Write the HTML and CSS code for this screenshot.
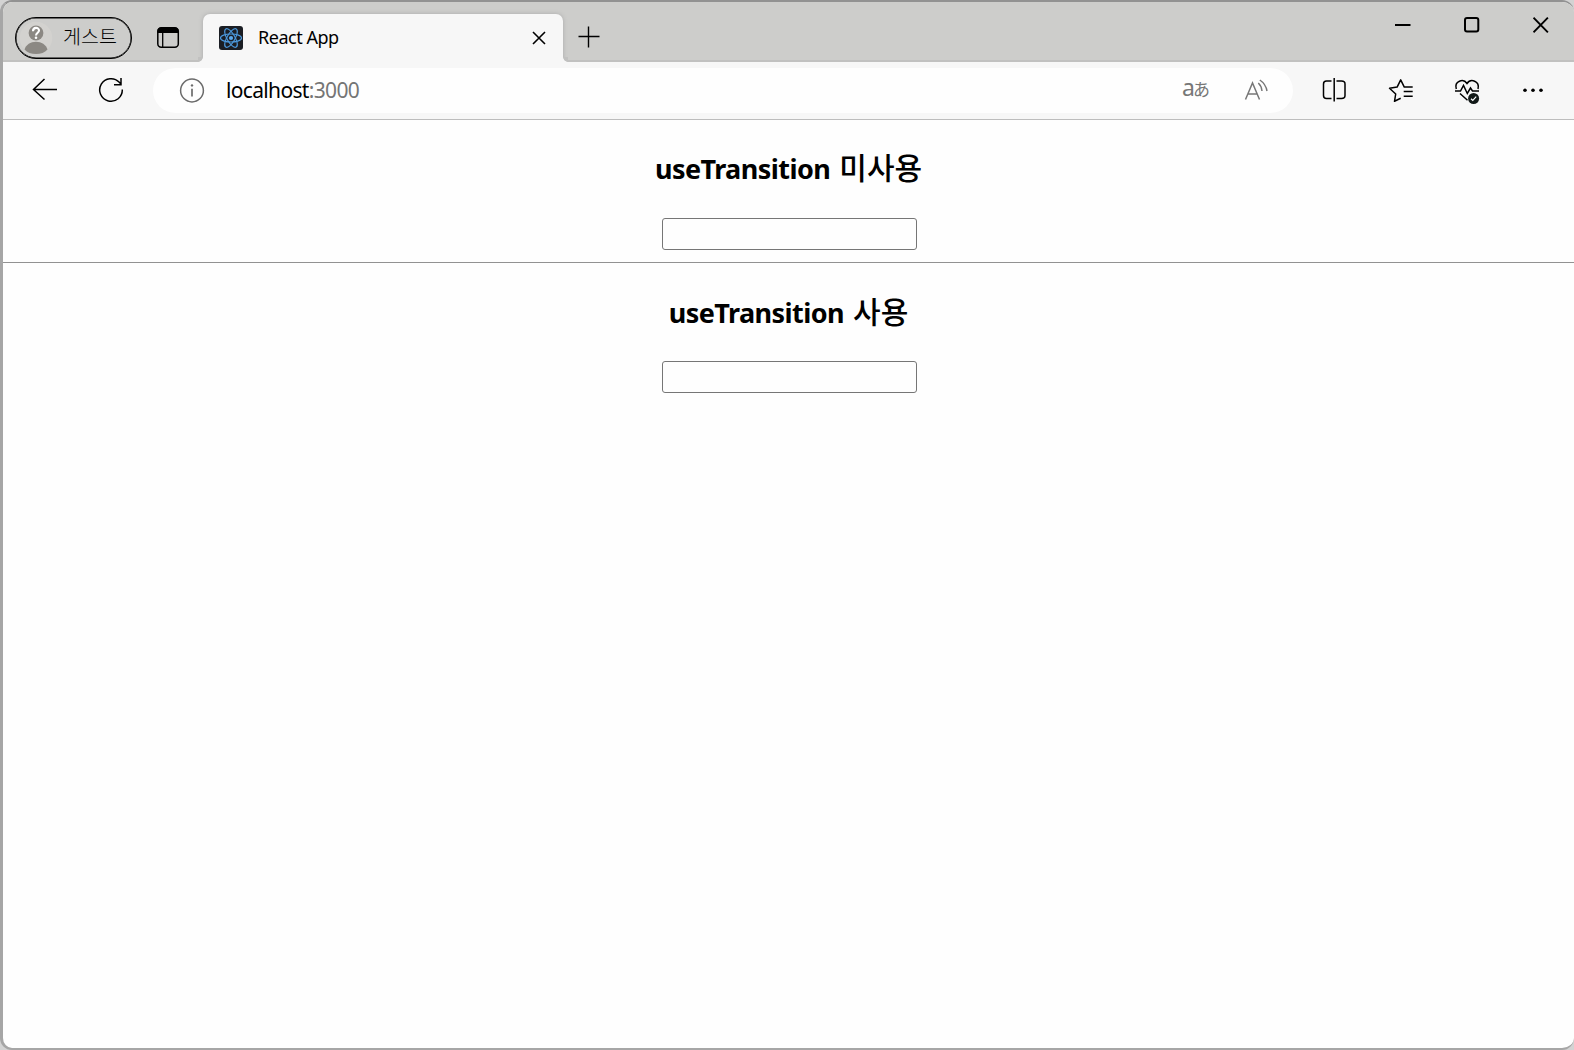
FILE: index.html
```html
<!DOCTYPE html>
<html lang="ko">
<head>
<meta charset="utf-8">
<title>React App</title>
<link rel="stylesheet" href="styles.css">
</head>
<body>
<div class="window">
  <header class="titlebar">
    <div class="profile">
      <svg class="avatar" width="34" height="34" viewBox="19 21 34 34">
        <circle cx="36" cy="38" r="16.3" fill="#d3d2cf"/>
        <circle cx="36" cy="33" r="7.4" fill="#8b8883"/>
        <path d="M24.5 49.5c1.500-5 6-7.800 11.500-7.800s10 2.800 11.500 7.800c-2.800 3-6.500 4.600-11.500 4.600s-8.700-1.600-11.500-4.600z" fill="#8b8883"/>
        <path d="M33 31.300c0-4.500 6-4.300 6-.8 0 2.300-3 2.200-3 5" fill="none" stroke="#fff" stroke-width="2.100"/>
        <circle cx="36" cy="37.700" r="1.300" fill="#fff"/>
      </svg>
      <span class="profile-name">게스트</span>
    </div>
    <svg class="tab-actions" width="24" height="24" viewBox="156 26 24 24">
      <rect x="157.800" y="27.800" width="20.500" height="19.500" rx="3.500" fill="none" stroke="#000" stroke-width="1.500"/>
      <path d="M157.500 33v-2q0-3.500 3.500-3.500h14q3.500 0 3.500 3.500v2z"/>
      <path d="M162.700 33v14" stroke="#000" stroke-width="1.300"/>
    </svg>
    <div class="tab">
      <svg width="24" height="24" viewBox="0 0 24 24">
        <rect width="24" height="24" rx="3" fill="#1b1e24"/>
        <g fill="none" stroke="#4b98dc" stroke-width="1.200">
          <ellipse cx="12" cy="12" rx="10.500" ry="4"/>
          <ellipse cx="12" cy="12" rx="10.500" ry="4" transform="rotate(60 12 12)"/>
          <ellipse cx="12" cy="12" rx="10.500" ry="4" transform="rotate(120 12 12)"/>
        </g>
        <circle cx="12" cy="12" r="2.100" fill="#5aa9ee"/>
      </svg>
      <span class="tab-title">React App</span>
      <svg width="14" height="14" viewBox="0 0 14 14"><path d="M1 1l12 12M13 1L1 13" stroke="#000" stroke-width="1.600"/></svg>
    </div>
    <svg class="new-tab" width="22" height="22" viewBox="0 0 22 22"><path d="M.5 10.500h21M10.500 .5v21" stroke="#000" stroke-width="1.400"/></svg>
    <div class="controls">
      <svg width="16" height="16" viewBox="0 0 16 16"><path d="M0 8h15.500" stroke="#000" stroke-width="2"/></svg>
      <svg width="16" height="16" viewBox="0 0 16 16"><rect x="1" y="1" width="13.300" height="13.600" rx="2" fill="none" stroke="#000" stroke-width="2"/></svg>
      <svg width="16" height="16" viewBox="0 0 16 16"><path d="M.5.700l14.400 14.600M14.900.700L.5 15.300" stroke="#000" stroke-width="1.900"/></svg>
    </div>
  </header>
  <nav class="toolbar">
    <svg class="back" width="26" height="26" viewBox="32 76 26 26"><path d="M57 89.500H33.500M44.500 79L33.500 89.500L44.500 99.500" fill="none" stroke="#000" stroke-width="1.500"/></svg>
    <svg class="reload" width="26" height="26" viewBox="98 77 26 26"><path d="M122.300 89.500a11.300 11.300 0 1 1-3-7.200l2 2.200M121 78v6.700h-7" fill="none" stroke="#000" stroke-width="1.500"/></svg>
    <div class="address">
      <svg width="26" height="26" viewBox="0 0 26 26"><circle cx="13" cy="12.500" r="11.400" fill="none" stroke="#6b6b6b" stroke-width="1.500"/><path d="M13 10.800v7.700" stroke="#6b6b6b" stroke-width="1.700"/><circle cx="13" cy="7.400" r="1.200" fill="#6b6b6b"/></svg>
      <span class="url">localhost<span class="port">:3000</span></span>
      <span class="translate"><span class="latin">a</span><span class="kana">あ</span></span>
      <svg class="read" width="26" height="26" viewBox="1243 77.500 26 26"><path d="M1245.500 99L1252.500 82.500L1259.500 99M1248 93.500h9M1258.300 82.500q3.300 3 3.700 8M1259.800 79.500q6 4 7.200 11" fill="none" stroke="#777" stroke-width="1.500"/></svg>
    </div>
    <div class="tools">
      <svg width="28" height="28" viewBox="1320 76 28 28"><path d="M1331.500 81h-5q-3 0-3 3v11.500q0 3 3 3h5M1336.500 81h5q3.500 0 3.500 3v11.500q0 3-3.500 3h-5M1334.200 78v23.500" fill="none" stroke="#000" stroke-width="1.500"/></svg>
      <svg width="28" height="28" viewBox="1386.300 75.700 28 28"><path d="M1401 98l-6.200 3 1.200-7.300-6.200-5.700 7.600-1.200 3.600-7.300 3.600 7.300h8.400M1404 91.200h9M1404 96h9" fill="none" stroke="#000" stroke-width="1.500" stroke-linejoin="round"/></svg>
      <svg width="28" height="28" viewBox="1453 76 28 28"><g fill="none" stroke="#000" stroke-width="1.500"><path d="M1456.300 89c-2.300-7.800 7-11 10.700-5.500 3.700-5.500 13-2.500 11 5.500M1460 93.500l7.500 6.700"/><path d="M1455 91h5.500l3-5.500 3.800 8 3.200-5.500 2 3h6.500"/></g><circle cx="1473.600" cy="98.500" r="5.500" fill="#111817"/><path d="M1471 98.700l1.800 1.700 3.400-3.800" fill="none" stroke="#fff" stroke-width="1.200"/></svg>
      <svg width="28" height="28" viewBox="1519 76 28 28"><circle cx="1525" cy="90.200" r="1.800"/><circle cx="1533" cy="90.200" r="1.800"/><circle cx="1541" cy="90.200" r="1.800"/></svg>
    </div>
  </nav>
  <main class="page">
    <section class="demo">
      <h2><span class="en">useTransition</span><span class="ko">미사용</span></h2>
      <input class="field" type="text">
    </section>
    <section class="demo demo-second">
      <h2><span class="en">useTransition</span><span class="ko">사용</span></h2>
      <input class="field" type="text">
    </section>
  </main>
</div>
</body>
</html>
```
FILE: styles.css
```css
* { box-sizing: border-box; }
html { background: #d3d3d3; }
body {
  margin: 0;
  height: 1050px;
  overflow: hidden;
  font-family: "Noto Sans", "Noto Sans CJK KR", sans-serif;
  color: #000;
}
svg { display: block; flex: none; }
.window {
  height: 1050px;
  display: flex;
  flex-direction: column;
  border: solid #a6a6a6;
  border-width: 2px 0 2px 3px;
  border-top-color: #929292;
  border-radius: 12px;
  overflow: hidden;
  background: #fefefe;
}
.titlebar {
  height: 60px;
  flex: none;
  display: flex;
  align-items: flex-start;
  background: #cdcdcb;
  box-shadow: inset 0 -2px #c1c1c0;
}
.profile {
  width: 117px;
  height: 42px;
  margin: 15px 0 0 12px;
  border: 1px solid #000;
  box-shadow: inset 0 0 0 0.500px #000;
  border-radius: 21px;
  display: flex;
  align-items: center;
  padding-left: 3px;
}
.profile-name {
  margin: 0 0 4px 10px;
  font: 300 19.500px/26px "Noto Sans CJK KR", sans-serif;
  white-space: nowrap;
}
.tab-actions { margin: 24px 0 0 24px; }
.tab {
  position: relative;
  width: 360px;
  height: 48px;
  margin: 12px 0 0 23px;
  padding: 0 17px 0 16px;
  display: flex;
  align-items: center;
  background: #f7f7f7;
  border-radius: 7px 7px 0 0;
  box-shadow: 0 0 4px #aaa;
}
/* flared feet joining the tab to the toolbar */
.tab::before,
.tab::after {
  content: "";
  position: absolute;
  bottom: 0;
  width: 5px;
  height: 5px;
}
.tab::before {
  left: -5px;
  background: radial-gradient(circle at 0 0, #c1c1c0 4.500px, #f7f7f7 5.200px);
}
.tab::after {
  right: -5px;
  background: radial-gradient(circle at 100% 0, #c1c1c0 4.500px, #f7f7f7 5.200px);
}
.tab-title {
  flex: 1;
  margin: 0 0 2px 15px;
  font-size: 18px;
  letter-spacing: -0.480px;
}
.new-tab { margin: 24px 0 0 15px; }
.controls {
  margin: 15px 25px 0 auto;
  display: flex;
  gap: 53px;
}
/* stacked above the tab so that its shadow stays in the title bar */
.toolbar {
  position: relative;
  height: 58px;
  flex: none;
  display: flex;
  align-items: flex-start;
  background: #f7f7f7;
  border-bottom: 1px solid #bdbdbd;
}
.back { margin: 14px 0 0 29px; }
.reload { margin: 15px 0 0 40px; }
.address {
  width: 1140px;
  height: 45px;
  margin: 6px 0 0 29px;
  padding: 0 24px 0 26px;
  display: flex;
  align-items: center;
  background: #fefefe;
  border-radius: 23px;
}
.url { margin: 0 0 1px 21px; font-size: 21px; letter-spacing: -0.660px; }
.port { color: #757575; }
.translate {
  display: flex;
  align-items: baseline;
  margin: 0 0 5px auto;
  color: #777;
  line-height: 26px;
}
.latin { font-size: 23px; }
.kana { font: 17px/26px "Noto Sans CJK JP", sans-serif; margin: 0 -1px 0 -2px; }
.read { margin-left: 34px; }
.tools {
  display: flex;
  gap: 38.400px;
  margin: 14px 0 0 27px;
}
.page { flex: 1; padding-top: 23px; }
.demo {
  height: 120px;
  border-bottom: 1px solid #929292;
  display: flex;
  flex-direction: column;
  align-items: center;
}
.demo-second { height: 154px; padding-top: 23px; border: 0; }
h2 {
  margin: -3px 0 3px;
  height: 52px;
  display: flex;
  align-items: baseline;
  font-size: 27px;
  line-height: 52px;
}
.demo-second h2 { margin: -2px 0 2px; }
.en { letter-spacing: -0.550px; }
.ko { font: 500 30px/52px "Noto Sans CJK KR", sans-serif; margin-left: 9px; }
.field {
  width: 255px;
  height: 32px;
  margin: 23px 0 0 2px;
  border: 1px solid #767676;
  border-radius: 3px;
  background: #fefefe;
  flex: none;
}
```
